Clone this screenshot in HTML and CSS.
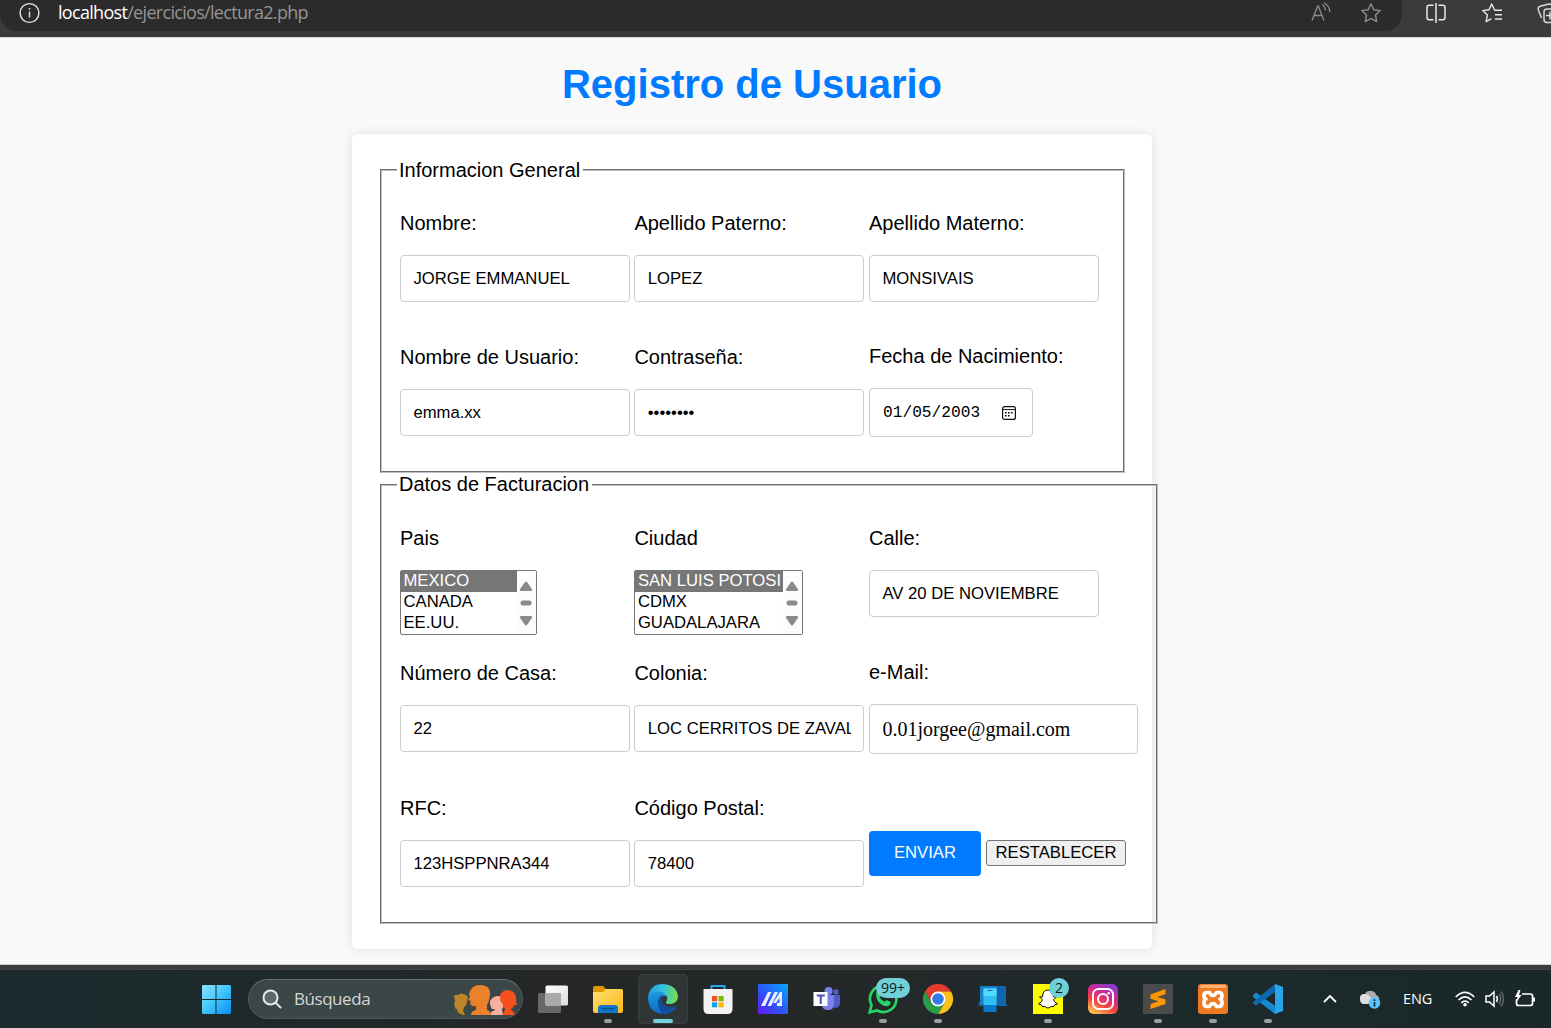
FILE: index.html
```html
<!DOCTYPE html>
<html lang="es">
<head>
<meta charset="utf-8">
<title>Registro de Usuario</title>
<link rel="stylesheet" href="styles.css">
</head>
<body>
<header class="toolbar">
  <div class="address">
    <svg class="info" width="22" height="22" viewBox="0 0 22 22" fill="none" stroke="#e4e4e4" stroke-width="1.4"><circle cx="11.500" cy="11" r="9.4"/><path d="M11.500 9.5v6"/><path d="M11.500 6v1.6"/></svg>
    <span class="url"><b>localhost</b>/ejercicios/lectura2.php</span>
    <svg class="read" width="22" height="22" viewBox="0 0 22 22" fill="none" stroke="#8d8d8d" stroke-width="1.3"><path d="M2 18.500 7.700 4h.6L14 18.500M4 13.500h8M12 2.500q3.400 2 3.400 6M14 1q5.500 2.400 5.800 9"/></svg>
    <svg class="star" width="22" height="22" viewBox="0 0 22 22" fill="none" stroke="#8d8d8d" stroke-width="1.4" stroke-linejoin="round"><path d="m11 1.8 2.8 6 6.4.8-4.7 4.5 1.2 6.5L11 16.5l-5.7 3.1 1.2-6.5-4.7-4.5 6.4-.8z"/></svg>
  </div>
  <svg class="split" width="22" height="22" viewBox="0 0 22 22" fill="none" stroke="#e8e8e8" stroke-width="1.5"><path d="M8.5 3.2H4.2Q2 3.2 2 5.4v10.2q0 2.2 2.2 2.2h4.3M13.5 3.2h4.3Q20 3.2 20 5.4v10.2q0 2.2-2.2 2.2h-4.3M11 1v20"/></svg>
  <svg class="favs" width="22" height="22" viewBox="0 0 22 22" fill="none" stroke="#e8e8e8" stroke-width="1.4" stroke-linejoin="round"><path d="M21 8.2h-7.3L10.7 2 8 7.8l-6.3.8 4.7 4.5L5.1 19.6l5.3-3M14 12.8h7M14 17h7"/></svg>
  <svg class="coll" width="22" height="22" viewBox="0 0 22 22" fill="none" stroke="#d8d8d8" stroke-width="1.5"><path d="M5.500 16 2.200 7.500Q1.700 5 4 4.200L13 2q2-.3 2.800 2"/><rect x="8" y="7" width="17" height="13.500" rx="3"/><path d="M14 9.500v8M10 13.500h8"/></svg>
</header>

<main class="page">
  <h1>Registro de Usuario</h1>
  <form class="card">
    <fieldset class="general">
      <legend>Informacion General</legend>
      <div class="fields">
        <div class="field"><label>Nombre:</label><input type="text" value="JORGE EMMANUEL"></div>
        <div class="field"><label>Apellido Paterno:</label><input type="text" value="LOPEZ"></div>
        <div class="field"><label>Apellido Materno:</label><input type="text" value="MONSIVAIS"></div>
        <div class="field"><label>Nombre de Usuario:</label><input type="text" value="emma.xx"></div>
        <div class="field"><label>Contraseña:</label><input type="password" value="emma2003"></div>
        <div class="field raised"><label>Fecha de Nacimiento:</label>
          <div class="date"><span>01/05/2003</span><svg width="14" height="14" viewBox="0 0 14 14"><rect x=".6" y=".6" width="12.8" height="12.8" rx="2" fill="none" stroke="#111" stroke-width="1.2"/><path d="M.6 3.6h12.8" stroke="#111"/><path d="M3 6h1.600v1.500H3zM6 6h1.600v1.500H6zM9 6h1.600v1.500H9zM3 9h1.600v1.500H3zM6 9h1.600v1.500H6z"/></svg></div></div>
      </div>
    </fieldset>
    <fieldset class="billing">
      <legend>Datos de Facturacion</legend>
      <div class="fields">
        <div class="field"><label>Pais</label>
          <div class="list country"><ul><li class="on">MEXICO</li><li>CANADA</li><li>EE.UU.</li></ul><div class="scroll"><svg width="14" height="46" viewBox="0 0 14 46" fill="#8a8a8a"><path d="M6 1 .8 8.500Q.6 10 2 10h10q1.400 0 1.200-1.500L8 1Q7 0 6 1zM6 44 .8 36.500Q.6 35 2 35h10q1.400 0 1.200 1.500L8 44Q7 45 6 44z"/><rect x="1.500" y="19.500" width="11" height="5" rx="2.500"/></svg></div></div></div>
        <div class="field"><label>Ciudad</label>
          <div class="list city"><ul><li class="on">SAN LUIS POTOSI</li><li>CDMX</li><li>GUADALAJARA</li></ul><div class="scroll"><svg width="14" height="46" viewBox="0 0 14 46" fill="#8a8a8a"><path d="M6 1 .8 8.500Q.6 10 2 10h10q1.400 0 1.200-1.500L8 1Q7 0 6 1zM6 44 .8 36.500Q.6 35 2 35h10q1.400 0 1.200 1.500L8 44Q7 45 6 44z"/><rect x="1.500" y="19.500" width="11" height="5" rx="2.500"/></svg></div></div></div>
        <div class="field"><label>Calle:</label><input type="text" value="AV 20 DE NOVIEMBRE"></div>
        <div class="field"><label>Número de Casa:</label><input type="text" value="22"></div>
        <div class="field"><label>Colonia:</label><input type="text" value="LOC CERRITOS DE ZAVALA"></div>
        <div class="field raised"><label>e-Mail:</label><input class="mail" type="text" value="0.01jorgee@gmail.com"></div>
        <div class="field"><label>RFC:</label><input type="text" value="123HSPPNRA344"></div>
        <div class="field"><label>Código Postal:</label><input type="text" value="78400"></div>
        <div class="actions"><button class="send" type="button">ENVIAR</button><button class="reset" type="button">RESTABLECER</button></div>
      </div>
    </fieldset>
  </form>
</main>

<footer class="taskbar">
  <svg class="start" width="30" height="30" viewBox="0 0 30 30"><defs><linearGradient id="win" x2="1" y2="1"><stop stop-color="#8ee3ff"/><stop offset=".5" stop-color="#3ec5fb"/><stop offset="1" stop-color="#0a8cf5"/></linearGradient></defs><path fill="url(#win)" d="M2 1h12.500v14H1V2zM15.500 1H29l1 1v13H15.500zM1 16h13.500v14H2l-1-1zM15.500 16H30v13l-1 1H15.500z"/></svg>
  <div class="search">
    <svg width="20" height="20" viewBox="0 0 20 20" fill="none" stroke="#e6e9e9" stroke-width="2" stroke-linecap="round"><circle cx="8.500" cy="8.500" r="7" fill="#5a6869"/><path d="m13.500 13.500 5 5"/></svg>
    <span>Búsqueda</span>
    <svg class="people" width="64" height="32" viewBox="0 0 64 32"><path fill="#bd8528" d="M1 12q1-2 4-1 3-3 8 0l2 2q-1 3-1 6-1 3-3 4l-1 4q1 1 2 4-5 0-8-4l1-2q-3 1-3-2l-1-3 1-3z"/><path fill="#f7afa1" d="M37 17q3-5 8-5 6 0 7 7-1 4-3 6l1 6H37l2-4q3 0 3-2-4 1-4-2l-1-3z"/><path fill="#ea812c" d="M16 10q2-9 11-9 11 0 10 10-1 7-3 10v5q4 1 4 5H18q0-4 5-5v-4q-5 1-6-3l1-2-3-1 2-3z"/><path fill="#f4511e" d="M47 11q3-5 8-5 8 1 8 8 0 5 1 7h-3q-1 4-4 4 4 2 5 6H49q3-3 3-7-3-1-2-4-3-2-3-6z"/></svg>
  </div>
  <nav class="apps">
    <div class="app"><svg width="30" height="30" viewBox="0 0 30 30"><defs><linearGradient id="tv" x2="1" y2="1"><stop stop-color="#fff"/><stop offset="1" stop-color="#ddd"/></linearGradient></defs><rect x="0" y="9" width="23" height="20" rx="1.500" fill="#686868"/><rect x="7.500" y="1.500" width="22.500" height="20" rx="1.500" fill="url(#tv)"/><path fill="#aaa" d="M7.500 9H23v12.500H9q-1.500 0-1.500-1.500z"/></svg></div>
    <div class="app run"><svg width="30" height="30" viewBox="0 0 30 30"><defs><linearGradient id="fo" x2="1" y2="1"><stop stop-color="#ffdf70"/><stop offset="1" stop-color="#fbb91b"/></linearGradient></defs><path fill="#dc9800" d="M0 4q0-2 2-2h8l3 3h15q2 0 2 2v8H0z"/><path fill="url(#fo)" d="M0 8h10l3-3h15q2 0 2 2v20q0 2-2 2H2q-2 0-2-2z"/><path fill="#1277cc" d="M5 29v-5q0-3 3-3h14q3 0 3 3v5z"/><path stroke="#075296" stroke-width="1.500" d="M8 24.500h14"/></svg></div>
    <div class="app active"><svg width="30" height="30" viewBox="0 0 30 30"><defs><linearGradient id="e1" x1="0" y1=".3" x2="1" y2=".4"><stop stop-color="#1b9de2"/><stop offset=".5" stop-color="#35c3dc"/><stop offset="1" stop-color="#76df4e"/></linearGradient><linearGradient id="e2" x2="0" y2="1"><stop stop-color="#1e9fe0"/><stop offset="1" stop-color="#0b68c4"/></linearGradient></defs><path fill="url(#e2)" d="M0 13Q4 5 12 6q7 1 7 6l-3 0q-4 1-3 6 2 7 9 7 4 0 6-1-5 6-13 6Q0 29 0 13z"/><path fill="#114f9c" d="M10 20q-1-7 5-9-3 6 1 10 5 4 12 1 .5 0 0 1-4 7-13 7-4-4-5-10z"/><path fill="url(#e1)" d="M0 13Q2 0 15 0q14 1 15 13-1 7-8 7-5 0-4-2 3-4-1-8-8-6-17 3z"/></svg></div>
    <div class="app"><svg width="30" height="30" viewBox="0 0 30 30"><path d="M8.500 7V2h13v5" fill="none" stroke="#23a9ec" stroke-width="2"/><path fill="#f2f2f2" d="M.500 5h29v20q0 5-5 5h-19q-5 0-5-5z"/><path fill="#f25022" d="M9 12h5.200v5.200H9z"/><path fill="#7fba00" d="M15.500 12h5.200v5.200h-5.200z"/><path fill="#00a4ef" d="M9 18.300h5.200v5H9z"/><path fill="#ffb900" d="M15.500 18.300h5.200v5h-5.200z"/></svg></div>
    <div class="app"><svg width="30" height="30" viewBox="0 0 30 30"><defs><linearGradient id="ma" x1="0" y1="1" x2="1" y2="0"><stop stop-color="#6519f5"/><stop offset=".5" stop-color="#285cf7"/><stop offset="1" stop-color="#08a8ff"/></linearGradient></defs><path fill="url(#ma)" d="M0 0h30v30H0z"/><path fill="#e8eeff" d="m3 22 7-14h3.500L7 22zM9.500 22l7-14H20l-7 14zM15 19l7-11h2v14h-2.500V14L18 19z"/><circle cx="20.500" cy="20.500" r="1.700" fill="#fff"/></svg></div>
    <div class="app"><svg width="30" height="30" viewBox="0 0 30 30"><circle cx="15.500" cy="7" r="4" fill="#7b83eb"/><circle cx="23" cy="8" r="2.800" fill="#5059c9"/><path fill="#5059c9" d="M18 11h9v8q0 5-6 5z"/><path fill="#7b83eb" d="M10 11h11v9q0 6-6 6t-6-6z"/><path fill="#fff" d="M.500 8h14v14h-14z"/><path fill="#4b53bc" d="M3.800 10.500h8v2h-3V20H6.700v-7.500H3.800z"/></svg></div>
    <div class="app run"><svg width="30" height="30" viewBox="0 0 30 30"><path fill="none" stroke="#25d366" stroke-width="2.700" d="M1.700 28.300 3.500 21A13.200 13.200 0 1 1 9 26.500z"/><path fill="#25d366" d="M8.500 8q2-2 3 0l1.500 3.200-1.400 2q1.800 3.500 5.400 4.600l1.700-1.900 4 2q0 4-4.200 4.400-4.500 0-8.500-5Q7 11.500 8.500 8z"/></svg><span class="badge wide">99+</span></div>
    <div class="app run"><svg width="30" height="30" viewBox="0 0 30 30"><path fill="#e33b2e" d="M2 7.500a15 15 0 0 1 26 0H15v7.500L8.500 18.500z"/><path fill="#fbc116" d="M28 7.500A15 15 0 0 1 15 30l6.500-11.200L15 7.500z"/><path fill="#2b9c47" d="M2 7.500A15 15 0 0 0 15 30l6.500-11.200H8.500z"/><circle cx="15" cy="15" r="7.500" fill="#fff"/><circle cx="15" cy="15" r="5.800" fill="#347be8"/></svg></div>
    <div class="app"><svg width="30" height="30" viewBox="0 0 30 30"><path fill="#1164ae" d="M2 2h26v18l2 2H0l2-2z"/><path fill="#1981c8" d="M2 2h17v18H0l2-2z"/><path fill="#31c0f2" d="M5.500 4.500h13V21h-13z"/><path fill="#0878cb" d="M5.500 21h13v7h-13z"/><path fill="#55daff" d="M5.500 4.500h13V12h-13z"/><path stroke="#1164ae" d="M9.500 6.500h5"/></svg></div>
    <div class="app run"><svg width="30" height="30" viewBox="0 0 30 30"><path fill="#fffc00" d="M0 0h30v30H0z"/><path fill="#fff" stroke="#111" d="M15 6q5.500 0 5.500 7l3-.2-3 3q1 3 4 4l-3 1.200-.8 1.500q-3-.5-5.700 1.700-2.700-2.200-5.700-1.700L8.500 21l-3-1.200q3-1 4-4l-3-3 3 .2Q9.500 6 15 6z"/></svg><span class="badge">2</span></div>
    <div class="app"><svg width="30" height="30" viewBox="0 0 30 30"><defs><linearGradient id="ig" x1=".2" y1="1" x2=".7" y2="0"><stop stop-color="#ffcb51"/><stop offset=".35" stop-color="#f7443f"/><stop offset=".65" stop-color="#d52890"/><stop offset="1" stop-color="#8d39d0"/></linearGradient></defs><rect width="30" height="30" rx="6" fill="url(#ig)"/><rect x="5" y="5" width="20" height="20" rx="5.500" fill="none" stroke="#fff" stroke-width="2"/><circle cx="15" cy="15" r="5" fill="none" stroke="#fff" stroke-width="2"/><circle cx="20.700" cy="9.300" r="1.300" fill="#fff"/></svg></div>
    <div class="app run"><svg width="30" height="30" viewBox="0 0 30 30"><rect width="30" height="30" rx="1.500" fill="#4b4b4b"/><path fill="#ff9800" d="M7.500 10.500 22.500 5v5l-8.200 3 8.200 2.500V20l-15 5v-5l8.200-2.700-8.200-2.500z"/></svg></div>
    <div class="app run"><svg width="30" height="30" viewBox="0 0 30 30"><rect width="30" height="30" rx="3" fill="#ef7a24"/><rect x="2" y="1" width="26" height="3" rx="1.500" fill="#ffb277"/><path d="M9 8.500h2.500q1.500 3 3.500 3t3.500-3H21q3 0 3 3t-2 3.500q2 .5 2 4t-3 3.500h-2.500q-1.500-3-3.500-3t-3.500 3H9q-3 0-3-3.500t2-4q-2-.5-2-3.500t3-3z" fill="none" stroke="#fff" stroke-width="3.700" stroke-linejoin="round"/></svg></div>
    <div class="app run"><svg width="30" height="30" viewBox="0 0 30 30"><path fill="#1688d1" d="m0 11 3-2.500 20 14-1 7.500L0 13z"/><path fill="#0c69b0" d="m0 18 22-18v8L3 21.500 0 19.500z"/><path fill="#2aa5ec" d="m22 0 8 3v24l-8 3z"/></svg></div>
  </nav>
  <div class="tray">
    <svg class="chev" width="14" height="10" viewBox="0 0 14 10" fill="none" stroke="#fff" stroke-width="1.800"><path d="m1 8 6-6 6 6"/></svg>
    <svg class="cloud" width="22" height="20" viewBox="0 0 22 20"><path fill="#aaa" d="M1 9q0-4 5-4 2-4 7-3 4 1 4 4 4 1 3 6l-4 3H5Q1 15 1 9z"/><path fill="#ddd" d="M1 9q0-4 5-4 4 0 6 4l-3 6H5q-4 0-4-6z"/><circle cx="15.500" cy="14" r="5.800" fill="#57c5fb"/><path stroke="#10262b" stroke-width="1.600" d="M15.500 13v4.500M15.500 10.300v1.600"/></svg>
    <span class="lang">ENG</span>
    <svg class="wifi" width="20" height="16" viewBox="0 0 20 16" fill="none" stroke="#fff" stroke-width="1.600"><path d="M.700 6q9.300-9.300 18.600 0M3.500 9q6.500-6.300 13 0M6.300 11.800q3.700-3.500 7.400 0"/><circle cx="10" cy="13.800" r="1" fill="#fff"/></svg>
    <svg class="sound" width="20" height="18" viewBox="0 0 20 18" fill="none" stroke="#fff" stroke-width="1.500"><path d="M1 6h3.500L9 2v14l-4.500-4H1zM11.500 6q1.800 3 0 6"/><path stroke="#5c6869" d="M14 4q3.500 5 0 10M16 1.500q5 7.500 0 15"/></svg>
    <svg class="batt" width="21" height="18" viewBox="0 0 21 18" fill="none" stroke="#fff" stroke-width="1.700"><path d="M7 4h8.500q2 0 2 2v7.500q0 2-2 2h-12q-2 0-2-2V9"/><path d="M19 7.500v4" stroke-width="2"/><path fill="#fff" stroke="none" d="M3.500 0 0 7h2.500l-1 5L6.500 5H4L5.500 0z"/></svg>
  </div>
</footer>
</body>
</html>
```
FILE: styles.css
```css
* { box-sizing: border-box; }
body {
  margin: 0;
  width: 1551px;
  height: 1028px;
  overflow: hidden;
  display: flex;
  flex-direction: column;
  font-family: "Liberation Sans", Arial, sans-serif;
  font-size: 20px;
  color: #000;
}
svg { display: block; flex: none; }

/* Browser toolbar */
.toolbar {
  height: 38px;
  flex: none;
  display: flex;
  align-items: flex-start;
  background: #3b3b3b;
  border-bottom: 1px solid #d6d6d6;
  overflow: hidden;
}
.address {
  width: 1402px;
  height: 31px;
  flex: none;
  display: flex;
  align-items: flex-start;
  padding: 2px 0 0 18px;
  background: #2b2b2b;
  border-radius: 0 0 17px 17px;
}
.url {
  width: 1234px;
  margin: -1px 0 0 18px;
  font: 18px/22px "Open Sans", "Noto Sans", sans-serif;
  letter-spacing: -.69px;
  color: #949494;
}
.url b { font-weight: 400; color: #fff; }
.read { margin-left: 18px; }
.star { margin-left: 28px; }
.split { margin: 2px 0 0 23px; }
.favs { margin: 2px 0 0 34px; }
.coll { margin: 2px 0 0 33px; }

/* Page */
.page {
  flex: 1;
  min-height: 0;
  display: flex;
  flex-direction: column;
  align-items: center;
  padding-right: 47px;
  background: #f9f9f9;
}
h1 {
  margin: 23px 0 27px;
  font-size: 40px;
  line-height: 46px;
  color: #007bff;
}
.card {
  width: 800px;
  height: 815px;
  padding: 25px 28px;
  background: #fff;
  border-radius: 6px;
  box-shadow: 0 0 12px rgba(0, 0, 0, .1);
}
fieldset {
  min-width: 0;
  margin: 0;
  padding: 0 0 0 18px;
  border: 2px groove #c0c0c0;
}
.general { width: 745px; height: 314px; }
.billing { width: 778px; height: 451px; }
legend { margin-left: -3px; padding: 0 3px 0 2px; line-height: 23px; }
.general legend { padding-top: 1px; line-height: 21px; }
.fields {
  display: grid;
  grid-template-columns: 234.4px 234.6px 270px;
  grid-auto-rows: 134px;
  padding-top: 31px;
}
.billing .fields { grid-auto-rows: 135px; }
.field { display: flex; flex-direction: column; align-items: flex-start; }
.field label { line-height: 23px; margin-bottom: 20px; white-space: nowrap; }
.raised { margin-top: -1px; }
input {
  width: 230px;
  height: 47px;
  padding: 0 12.4px;
  border: 1px solid #ccc;
  border-radius: 4px;
  background: #fff;
  color: #000;
  font: 16.67px "Liberation Sans", Arial, sans-serif;
}
.mail {
  width: 269px;
  height: 50px;
  padding-top: 1px;
  font: 20px "Liberation Serif", "Times New Roman", serif;
}
.date {
  width: 164px;
  height: 49px;
  display: flex;
  align-items: center;
  justify-content: space-between;
  padding: 0 16px 0 13px;
  border: 1px solid #ccc;
  border-radius: 4px;
  font: 16.2px "Liberation Mono", monospace;
}
.list {
  height: 65px;
  display: flex;
  border: 1px solid #767676;
  border-radius: 2px;
  font-size: 16.67px;
}
.country { width: 137px; }
.city { width: 169px; }
.list ul { flex: 1; margin: 0; padding: 0; list-style: none; }
.list li { height: 21px; padding-left: 2.5px; line-height: 20px; white-space: nowrap; }
.list .on { background: #767676; color: #fff; }
.scroll { width: 19px; padding: 10px 0 0 2px; background: #fcfcfc; }
.actions { display: flex; align-items: flex-start; gap: 5px; padding-top: 34px; }
.actions button { font: 16.67px "Liberation Sans", Arial, sans-serif; }
.send {
  width: 112px;
  height: 45px;
  padding: 0 0 2px;
  border: 0;
  border-radius: 4px;
  background: #007bff;
  color: #fff;
}
.reset {
  width: 140px;
  height: 26px;
  margin-top: 9px;
  padding: 0;
  border: 1px solid #767676;
  border-radius: 3px;
  background: #efefef;
  color: #000;
}

/* Taskbar */
.taskbar {
  height: 63px;
  flex: none;
  display: flex;
  align-items: center;
  padding: 1px 0 0 201px;
  border-top: 4px solid #3b3b3b;
  background: linear-gradient(90deg, #1a2a2d, #1d292b 15%, #242627 35%, #252829 55%, #1d2a2b 75%, #1a2829);
  box-shadow: 0 -1px #cfcfcf, inset 0 1px #424746;
  position: relative;
}
.search {
  width: 275px;
  height: 40px;
  margin-left: 17px;
  display: flex;
  align-items: center;
  padding: 0 5px 0 13px;
  border: 1px solid #4e5a5a;
  border-top-color: #657070;
  border-radius: 20px;
  background: #3b4647;
}
.search span {
  flex: 1;
  margin-left: 12px;
  font: 17px/24px "Open Sans", "Noto Sans", sans-serif;
  letter-spacing: -.45px;
  color: #d2d7d7;
}
.people { margin-top: 2px; }
.apps { display: flex; gap: 5px; margin-left: 5px; }
.app {
  width: 50px;
  height: 50px;
  display: flex;
  align-items: center;
  justify-content: center;
  border-radius: 5px;
  position: relative;
}
.active { background: #303536; box-shadow: inset 0 0 0 1px #3a3f40; }
.run::after, .active::after {
  content: "";
  position: absolute;
  left: 21px;
  bottom: 1px;
  width: 8px;
  height: 4px;
  border-radius: 2px;
  background: #9a9e9f;
}
.active::after { left: 15px; width: 20px; background: #74d3dc; }
.badge {
  position: absolute;
  left: 26px;
  top: 4px;
  width: 20px;
  height: 20px;
  border-radius: 10px;
  background: #70d0d7;
  color: #101818;
  font: 14px/20px "Open Sans", "Noto Sans", sans-serif;
  text-align: center;
}
.wide { left: 18px; width: 34px; }
.tray { display: flex; align-items: center; margin-left: 30px; }
.cloud { margin-left: 22px; }
.lang {
  width: 30px;
  margin-left: 22px;
  font: 14.5px/20px "Open Sans", "Noto Sans", sans-serif;
  letter-spacing: -.1px;
  color: #fff;
}
.wifi { margin-left: 22px; }
.sound { margin-left: 10px; }
.batt { margin-left: 10px; }
```
